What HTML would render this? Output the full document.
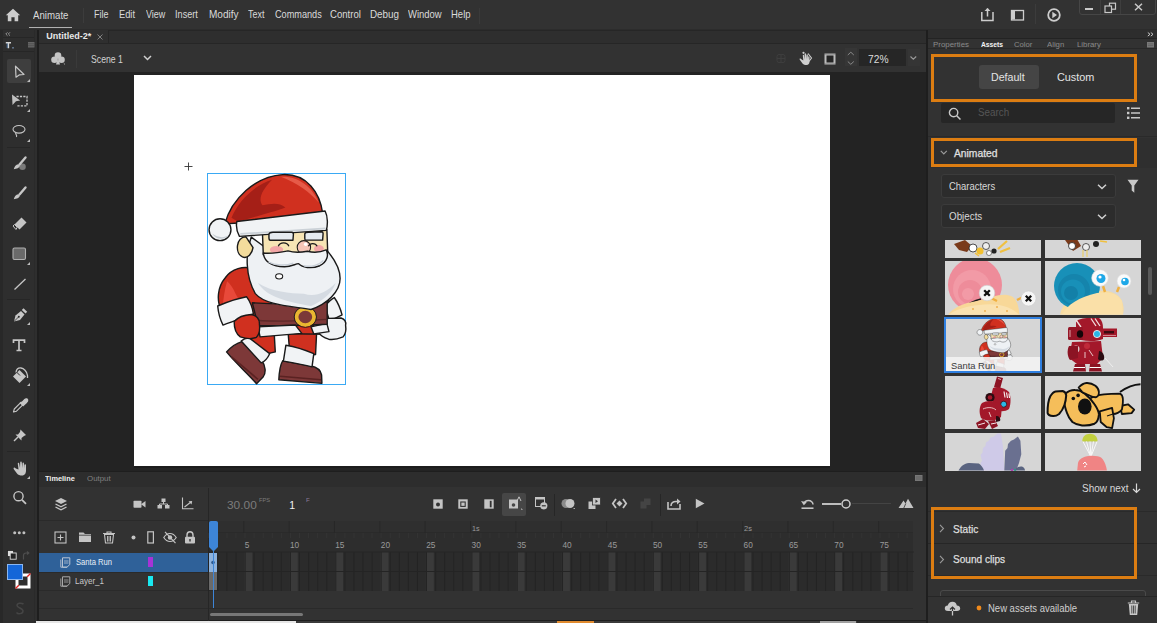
<!DOCTYPE html>
<html><head><meta charset="utf-8">
<style>
*{margin:0;padding:0;box-sizing:border-box;}
html,body{width:1157px;height:623px;overflow:hidden;background:#2b2b2b;font-family:"Liberation Sans",sans-serif;color:#d8d8d8;position:relative;}
.a{position:absolute;}
.t{position:absolute;white-space:nowrap;line-height:1;}
svg{position:absolute;overflow:visible;}
</style></head><body>
<div class="a" style="left:0px;top:0px;width:1157px;height:30px;background:#323232;"></div>
<div class="a" style="left:29px;top:27px;width:43px;height:1px;background:#b0b0b0;"></div>
<div class="a" style="left:83px;top:8px;width:1px;height:15px;background:#3c3c3c;"></div>
<div class="a" style="left:479px;top:8px;width:1px;height:16px;background:#3a3a3a;"></div>
<div class="a" style="left:0px;top:28.5px;width:1157px;height:1.5px;background:#2c2c2c;"></div>
<span class="t" style="left:32.75px;top:10.42px;font-size:11.20px;color:#dadada;transform:scaleX(0.864);transform-origin:0 0;">Animate</span>
<span class="t" style="left:94.48px;top:9.31px;font-size:10.50px;color:#dadada;transform:scaleX(0.853);transform-origin:0 0;">File</span>
<span class="t" style="left:119.06px;top:9.31px;font-size:10.50px;color:#dadada;transform:scaleX(0.885);transform-origin:0 0;">Edit</span>
<span class="t" style="left:145.66px;top:9.31px;font-size:10.50px;color:#dadada;transform:scaleX(0.857);transform-origin:0 0;">View</span>
<span class="t" style="left:175.18px;top:9.31px;font-size:10.50px;color:#dadada;transform:scaleX(0.871);transform-origin:0 0;">Insert</span>
<span class="t" style="left:208.50px;top:9.31px;font-size:10.50px;color:#dadada;transform:scaleX(0.956);transform-origin:0 0;">Modify</span>
<span class="t" style="left:248.28px;top:9.31px;font-size:10.50px;color:#dadada;transform:scaleX(0.852);transform-origin:0 0;">Text</span>
<span class="t" style="left:275.04px;top:9.31px;font-size:10.50px;color:#dadada;transform:scaleX(0.871);transform-origin:0 0;">Commands</span>
<span class="t" style="left:330.12px;top:9.31px;font-size:10.50px;color:#dadada;transform:scaleX(0.914);transform-origin:0 0;">Control</span>
<span class="t" style="left:370.01px;top:9.31px;font-size:10.50px;color:#dadada;transform:scaleX(0.939);transform-origin:0 0;">Debug</span>
<span class="t" style="left:407.95px;top:9.31px;font-size:10.50px;color:#dadada;transform:scaleX(0.900);transform-origin:0 0;">Window</span>
<span class="t" style="left:450.84px;top:9.31px;font-size:10.50px;color:#dadada;transform:scaleX(0.906);transform-origin:0 0;">Help</span>
<svg style="left:5px;top:8px;" width="16" height="14" viewBox="0 0 16 14"><path d="M8 0.8 L15.2 7.2 H13.2 V13.2 H9.6 V9.3 H6.4 V13.2 H2.8 V7.2 H0.8 Z" fill="#cdcdcd"/></svg>
<svg style="left:980px;top:7px;" width="15" height="15" viewBox="0 0 15 15"><path d="M1.8 5 V13.5 H13 V5" stroke="#cdcdcd" stroke-width="1.5" fill="none"/><path d="M7.5 1.5 V9.5" stroke="#cdcdcd" stroke-width="1.5"/><path d="M4.5 4 L7.5 1 L10.5 4 Z" fill="#cdcdcd"/></svg>
<svg style="left:1010px;top:9px;" width="15" height="13" viewBox="0 0 15 13"><rect x="1.5" y="1.5" width="12" height="9.5" fill="none" stroke="#cdcdcd" stroke-width="1.3"/><rect x="2" y="2" width="3" height="8.5" fill="#cdcdcd"/></svg>
<div class="a" style="left:1035px;top:4px;width:1px;height:20px;background:#3c3c3c;"></div>
<svg style="left:1047px;top:8px;" width="14" height="14" viewBox="0 0 14 14"><circle cx="7" cy="7" r="5.8" fill="none" stroke="#cdcdcd" stroke-width="1.8"/><path d="M5.3 3.8 L10 7 L5.3 10.2 Z" fill="#cdcdcd"/></svg>
<div class="a" style="left:1079px;top:-3px;width:77px;height:17.5px;background:transparent;border:1px solid #464646;border-radius:3px;"></div>
<div class="a" style="left:1100px;top:0px;width:1px;height:14px;background:#3e3e3e;"></div>
<div class="a" style="left:1120px;top:0px;width:1px;height:14px;background:#3e3e3e;"></div>
<div class="a" style="left:1085.3px;top:8px;width:7.7px;height:2px;background:#c8c8c8;"></div>
<svg style="left:1104px;top:2px;" width="13" height="11" viewBox="0 0 13 11"><rect x="5.5" y="1.2" width="6" height="6" fill="none" stroke="#c8c8c8" stroke-width="1.2"/><rect x="1" y="4" width="6.5" height="6.5" fill="#323232" stroke="#c8c8c8" stroke-width="1.2"/></svg>
<svg style="left:1134px;top:3px;" width="9" height="8" viewBox="0 0 9 8"><path d="M1 0.8 L8 7.2 M8 0.8 L1 7.2" stroke="#c8c8c8" stroke-width="1.5"/></svg>
<div class="a" style="left:0px;top:30px;width:37px;height:593px;background:#2e2e2e;"></div>
<div class="a" style="left:0px;top:30px;width:3px;height:593px;background:#282828;"></div>
<div class="a" style="left:34px;top:30px;width:1px;height:593px;background:#2a2a2a;"></div>
<div class="a" style="left:37px;top:30px;width:2px;height:593px;background:#1e1e1e;"></div>
<div class="a" style="left:3px;top:37px;width:31px;height:1px;background:#262626;"></div>
<div class="a" style="left:3px;top:51px;width:31px;height:1px;background:#262626;"></div>
<svg style="left:5px;top:31.5px;" width="6" height="4" viewBox="0 0 6 4"><path d="M2.5 0.3 L0.8 2 L2.5 3.7 M5 0.3 L3.3 2 L5 3.7" stroke="#aaa" stroke-width="0.8" fill="none"/></svg>
<svg style="left:5px;top:41.5px;" width="10" height="7" viewBox="0 0 10 7"><path d="M0.8 0.8 H6 M3.4 0.8 V6.3" stroke="#d4d4d4" stroke-width="1.5" fill="none"/><path d="M2.2 1.5 V6" stroke="#4f86c6" stroke-width="0.7"/><rect x="7.2" y="5" width="1.6" height="1.6" fill="#6a7f9a"/></svg>
<svg style="left:28px;top:42px;" width="7" height="6" viewBox="0 0 7 6"><rect x="0" y="0" width="6.5" height="5.5" fill="#666"/><path d="M0 1.8H6.5M0 3.7H6.5" stroke="#444" stroke-width="0.6"/></svg>
<div class="a" style="left:7px;top:59px;width:24px;height:24px;background:#3e3e3e;border-radius:2px;"></div>
<svg style="left:14px;top:65px;" width="12" height="13" viewBox="0 0 12 13"><path d="M1.5 1.2 L10 9.5 L5.5 9.8 L2 12.2 Z" stroke="#c6c6c6" stroke-width="1.2" fill="none" stroke-linejoin="round"/></svg>
<svg style="left:27px;top:79px;" width="3" height="3" viewBox="0 0 3 3"><path d="M3 0 L3 3 L0 3 Z" fill="#bdbdbd"/></svg>
<svg style="left:11px;top:94px;" width="18" height="13" viewBox="0 0 18 13"><path d="M5.5 2.5 H16 V11.8 H5.5" stroke="#c6c6c6" stroke-width="1.3" fill="none" stroke-dasharray="2.2 1.2"/><path d="M1 0.6 L9.2 6.5 L5 7.2 L1.5 11 Z" fill="#c0c0c0"/></svg>
<svg style="left:27px;top:109px;" width="3" height="3" viewBox="0 0 3 3"><path d="M3 0 L3 3 L0 3 Z" fill="#bdbdbd"/></svg>
<svg style="left:12px;top:124px;" width="14" height="14" viewBox="0 0 14 14"><ellipse cx="7" cy="5.3" rx="6" ry="3.8" stroke="#c6c6c6" stroke-width="1.1" fill="none"/><path d="M4 8.5 C2.5 10 5.5 10.5 4.5 13" stroke="#c6c6c6" stroke-width="1.1" fill="none"/></svg>
<svg style="left:27px;top:139px;" width="3" height="3" viewBox="0 0 3 3"><path d="M3 0 L3 3 L0 3 Z" fill="#bdbdbd"/></svg>
<div class="a" style="left:7px;top:147px;width:23px;height:1px;background:#262626;"></div>
<svg style="left:12px;top:156px;" width="16" height="15" viewBox="0 0 16 15"><circle cx="10.5" cy="10.8" r="3.3" fill="#7a7a7a"/><path d="M13.5 1.5 L7.5 8.5" stroke="#c6c6c6" stroke-width="2.4" stroke-linecap="round"/><path d="M6.2 8.2 C4 8.5 2.5 10.5 1.8 13.2 C4.5 13 7.5 11.8 7.8 9.8 Z" fill="#c6c6c6"/></svg>
<svg style="left:12px;top:186px;" width="16" height="15" viewBox="0 0 16 15"><path d="M13.5 1.5 L7.5 8.5" stroke="#c6c6c6" stroke-width="2.4" stroke-linecap="round"/><path d="M6.2 8.2 C4 8.5 2.5 10.5 1.8 13.2 C4.5 13 7.5 11.8 7.8 9.8 Z" fill="#c6c6c6"/></svg>
<svg style="left:12px;top:216px;" width="16" height="16" viewBox="0 0 16 16"><path d="M9.5 1.5 L14.5 6.5 L7.5 13.5 L2.5 8.5 Z" fill="#c4c4c4"/><path d="M5.2 11.2 L2.5 8.5 L1 10 L4 13.5 Z" fill="none" stroke="#c4c4c4" stroke-width="1"/></svg>
<svg style="left:12px;top:247px;" width="15" height="14" viewBox="0 0 15 14"><rect x="1" y="1" width="12.5" height="11.5" rx="1.5" fill="#6a6a6a" stroke="#b0b0b0" stroke-width="1.1"/></svg>
<svg style="left:27px;top:262px;" width="3" height="3" viewBox="0 0 3 3"><path d="M3 0 L3 3 L0 3 Z" fill="#bdbdbd"/></svg>
<svg style="left:12px;top:277px;" width="16" height="15" viewBox="0 0 16 15"><path d="M2.5 12.5 L13.5 2" stroke="#c6c6c6" stroke-width="1.3"/></svg>
<div class="a" style="left:7px;top:299px;width:23px;height:1px;background:#262626;"></div>
<svg style="left:12px;top:307px;" width="16" height="17" viewBox="0 0 16 17"><path d="M2 14.5 L3.5 8.5 L9 4 L12.5 7.5 L8 13 Z" fill="#c6c6c6"/><path d="M9.8 3 L11.5 1.2 L15.2 4.8 L13.5 6.5 Z" fill="#c6c6c6"/><circle cx="6.8" cy="9.8" r="1" fill="#2e2e2e"/><path d="M2 14.5 L6.5 10" stroke="#2e2e2e" stroke-width="0.8"/></svg>
<svg style="left:27px;top:322px;" width="3" height="3" viewBox="0 0 3 3"><path d="M3 0 L3 3 L0 3 Z" fill="#bdbdbd"/></svg>
<svg style="left:12px;top:339px;" width="14" height="13" viewBox="0 0 14 13"><path d="M1.5 4 V1.2 H12.5 V4 M7 1.2 V11.5 M4.5 11.5 H9.5" stroke="#c6c6c6" stroke-width="1.7" fill="none"/></svg>
<svg style="left:11px;top:367px;" width="18" height="17" viewBox="0 0 18 17"><path d="M2 9.5 L8.5 3 L15 9.5 L8.5 16 Z" fill="#c6c6c6"/><path d="M5 5.5 C5.5 1.5 8 0.8 10 1 C12.5 1.3 16 4 16.5 8.5 L16.5 11" stroke="#c6c6c6" stroke-width="1.3" fill="none"/><path d="M5.5 5 L9 8.5" stroke="#2e2e2e" stroke-width="1"/></svg>
<svg style="left:27px;top:383px;" width="3" height="3" viewBox="0 0 3 3"><path d="M3 0 L3 3 L0 3 Z" fill="#bdbdbd"/></svg>
<svg style="left:12px;top:397px;" width="16" height="17" viewBox="0 0 16 17"><path d="M1.5 15 L2.3 12 L9.2 5.2 L11.3 7.3 L4.5 14.2 Z" fill="none" stroke="#c6c6c6" stroke-width="1.1" stroke-linejoin="round"/><path d="M8 5.5 L11 8.5 M9.5 5.8 L12.8 2.5 C13.8 1.5 15.2 1.8 15.6 2.6 C16 3.4 15.7 4.5 14.5 5.5 L11.2 8.6 Z" fill="#c6c6c6" stroke="#c6c6c6" stroke-width="1.2"/></svg>
<svg style="left:12px;top:428px;" width="16" height="14" viewBox="0 0 16 14"><path d="M8.5 1.5 L14 7 L12 8 L9.5 10 L9.5 12.5 L3.5 6.5 L6 6.5 L8 4 Z" fill="#c6c6c6"/><path d="M6 9 L2 13" stroke="#c6c6c6" stroke-width="1.4"/></svg>
<div class="a" style="left:7px;top:451px;width:23px;height:1px;background:#262626;"></div>
<svg style="left:12px;top:461px;" width="16" height="15" viewBox="0 0 16 15"><path d="M3 7 C2 6 1 7 2 8.5 L5 12.5 C6 14 8 14.5 10 14.5 C13 14.5 14 12 14 9.5 L14 4 C14 3 12.5 3 12.5 4 L12.5 7.5 L12 2.5 C12 1.2 10.5 1.2 10.5 2.5 L10.3 7 L9.8 1.5 C9.8 0.3 8.2 0.3 8.2 1.5 L8 7 L7.2 2.5 C7 1.3 5.6 1.5 5.8 2.8 L6.5 8.5 L5 8 Z" fill="#c6c6c6"/></svg>
<svg style="left:27px;top:476px;" width="3" height="3" viewBox="0 0 3 3"><path d="M3 0 L3 3 L0 3 Z" fill="#bdbdbd"/></svg>
<svg style="left:12px;top:490px;" width="16" height="16" viewBox="0 0 16 16"><circle cx="6.5" cy="6.2" r="4.6" stroke="#c6c6c6" stroke-width="1.4" fill="none"/><path d="M10 9.8 L14 13.8" stroke="#c6c6c6" stroke-width="1.8"/></svg>
<svg style="left:13px;top:531px;" width="13" height="4" viewBox="0 0 13 4"><circle cx="1.7" cy="1.8" r="1.5" fill="#c0c0c0"/><circle cx="6.3" cy="1.8" r="1.5" fill="#c0c0c0"/><circle cx="10.9" cy="1.8" r="1.5" fill="#c0c0c0"/></svg>
<svg style="left:7px;top:550px;" width="10" height="10" viewBox="0 0 10 10"><rect x="0.5" y="0.5" width="6" height="6" fill="#ddd" stroke="#222" stroke-width="0.8"/><rect x="3.2" y="3" width="6" height="6.2" fill="#222" stroke="#ddd" stroke-width="0.9"/></svg>
<svg style="left:22px;top:551px;" width="8" height="9" viewBox="0 0 8 9"><path d="M1.5 8.5 L1.5 4.5 C1.5 2.8 2.5 2 4.2 2 L6.5 2 M5 0.5 L6.8 2 L5 3.5" stroke="#4e4e4e" stroke-width="1.2" fill="none"/></svg>
<svg style="left:14.5px;top:573px;" width="16" height="16" viewBox="0 0 16 16"><rect x="0.5" y="0.5" width="15" height="15" fill="#fff"/><rect x="3.5" y="3.5" width="9" height="9" fill="#2e2e2e"/><path d="M0.5 15.5 L3.8 12.2 M15.5 0.5 L12.2 3.8" stroke="#e02020" stroke-width="1.3"/></svg>
<div class="a" style="left:7px;top:564px;width:15.5px;height:15.5px;background:#1466d8;border:1px solid #8ab6f0;"></div>
<svg style="left:15px;top:602px;" width="10" height="13" viewBox="0 0 10 13"><path d="M8.5 2 C6 0.5 2 1 2 3.5 C2 6 8 6 8 9 C8 12 3 12.5 1.5 10.5" stroke="#454545" stroke-width="1.5" fill="none"/></svg>
<div class="a" style="left:39px;top:30px;width:887px;height:14px;background:#2e2e2e;"></div>
<div class="a" style="left:39px;top:29.5px;width:887px;height:1px;background:#262626;"></div>
<div class="a" style="left:39px;top:30px;width:69px;height:14px;background:#2f2f2f;"></div>
<div class="a" style="left:108px;top:30px;width:1px;height:14px;background:#262626;"></div>
<div class="a" style="left:39px;top:43px;width:887px;height:1px;background:#262626;"></div>
<div class="a" style="left:39px;top:44px;width:887px;height:28px;background:#323232;"></div>
<div class="a" style="left:39px;top:72px;width:887px;height:400px;background:#232323;"></div>
<div class="a" style="left:134px;top:75px;width:696px;height:391px;background:#ffffff;"></div>
<div class="a" style="left:134px;top:466px;width:696px;height:2px;background:#1c1c1c;"></div>
<span class="t" style="left:46.26px;top:32.38px;font-size:9.00px;color:#e8e8e8;font-weight:bold;">Untitled-2*</span>
<svg style="left:96.5px;top:34px;" width="6" height="6" viewBox="0 0 6 6"><path d="M0.5 0.5 L5.5 5.5 M5.5 0.5 L0.5 5.5" stroke="#8a8a8a" stroke-width="0.9"/></svg>
<svg style="left:50px;top:51px;" width="16" height="16" viewBox="0 0 16 16"><circle cx="8" cy="4.6" r="3.3" fill="#c4c4c4"/><circle cx="4.5" cy="8.8" r="3.3" fill="#c4c4c4"/><circle cx="11.5" cy="8.8" r="3.3" fill="#c4c4c4"/><path d="M8 7 L6 13.5 H10 Z" fill="#c4c4c4"/><path d="M13.5 12.5 L15 12.5 L15 14 Z" fill="#aaa"/></svg>
<div class="a" style="left:76px;top:50px;width:1px;height:18px;background:#3a3a3a;"></div>
<span class="t" style="left:90.91px;top:54.50px;font-size:10.40px;color:#d2d2d2;transform:scaleX(0.836);transform-origin:0 0;">Scene 1</span>
<svg style="left:143px;top:55px;" width="9" height="6" viewBox="0 0 9 6"><path d="M1 1 L4.5 4.5 L8 1" stroke="#d0d0d0" stroke-width="1.5" fill="none"/></svg>
<svg style="left:776px;top:54px;" width="10" height="9" viewBox="0 0 10 9"><rect x="1" y="0.5" width="8" height="8" rx="2" fill="none" stroke="#3e3e3e" stroke-width="1"/><path d="M1 4.5H9M5 0.5V8.5" stroke="#3e3e3e" stroke-width="1"/></svg>
<svg style="left:798px;top:51px;" width="15" height="15" viewBox="0 0 15 15"><path d="M3 8 C2 7 1 8 2 9 L4.5 12.5 C5.5 13.8 7 14 8.5 14 C10.5 14 11.5 12.5 11.5 10.5 L11.5 6 C11.5 5 10.2 5 10.2 6 L10 8.5 L9.8 4 C9.8 3 8.5 3 8.5 4 L8.3 8.2 L8 3 C8 2 6.6 2 6.6 3 L6.6 8.5 L6 4.5 C6 3.5 4.7 3.6 4.8 4.6 L5.3 9.5 Z" fill="#cfcfcf"/><path d="M10 2.5 L13.5 7 L11 10.5" stroke="#cfcfcf" stroke-width="1.1" fill="none"/><circle cx="5.5" cy="1.8" r="1.1" fill="#cfcfcf"/></svg>
<svg style="left:824px;top:53px;" width="12" height="12" viewBox="0 0 12 12"><rect x="0.5" y="0.5" width="11" height="11" fill="#bcbcbc"/><rect x="2.5" y="2.5" width="7" height="7" fill="#262626"/><path d="M0.5 1.2H11.5M0.5 10.8H11.5" stroke="#555" stroke-width="0.8" stroke-dasharray="1 1"/></svg>
<div class="a" style="left:845px;top:48px;width:12px;height:18px;background:#363636;"></div>
<svg style="left:847px;top:51px;" width="8" height="15" viewBox="0 0 8 15"><path d="M0.8 4 L3.8 1.2 L6.8 4 M0.8 10.5 L3.8 13.3 L6.8 10.5" stroke="#8a8a8a" stroke-width="1" fill="none"/></svg>
<div class="a" style="left:859px;top:49px;width:47px;height:17px;background:#262626;"></div>
<span class="t" style="left:867.69px;top:53.56px;font-size:10.80px;color:#dcdcdc;transform:scaleX(0.948);transform-origin:0 0;">72%</span>
<div class="a" style="left:908px;top:49px;width:12px;height:17px;background:#353535;"></div>
<svg style="left:910px;top:56px;" width="7" height="4" viewBox="0 0 7 4"><path d="M0.5 0.5 L3.3 3.2 L6.2 0.5" stroke="#9a9a9a" stroke-width="1.1" fill="none"/></svg>
<svg style="left:184px;top:162px;" width="9" height="9" viewBox="0 0 9 9"><path d="M4.5 0.5V8.5M0.5 4.5H8.5" stroke="#333" stroke-width="0.9"/></svg>
<div class="a" style="left:207px;top:173px;width:139px;height:212px;background:transparent;border:1px solid #3aa9f4;"></div>
<svg style="left:205px;top:170px;" width="145" height="220" viewBox="0 0 821 1245.6"><path d="M 250 933 C 300 915 360 915 392 928 L 398 1030 C 350 1045 300 1045 268 1040 Z" fill="#d0301f" stroke="#1a1a1a" stroke-width="8" stroke-linejoin="round"/><path d="M 470 913 C 520 905 600 910 632 920 L 626 1045 C 580 1050 520 1048 480 1040 Z" fill="#d0301f" stroke="#1a1a1a" stroke-width="8" stroke-linejoin="round"/><path d="M 122 1030 C 150 1000 180 980 210 972 L 322 1080 C 345 1110 345 1150 330 1170 L 292 1210 C 240 1150 170 1090 122 1030 Z" fill="#7d3838" stroke="#1a1a1a" stroke-width="8" stroke-linejoin="round"/><path d="M 150 1058 L 300 1185" stroke="#5a2222" stroke-width="9"/><path d="M 205 968 C 220 955 240 950 252 952 L 366 1040 C 355 1065 335 1085 318 1092 Z" fill="#f1f3f5" stroke="#1a1a1a" stroke-width="8" stroke-linejoin="round"/><path d="M 440 1080 L 598 1108 C 630 1115 655 1130 660 1160 L 662 1208 L 418 1188 C 420 1140 428 1100 440 1080 Z" fill="#7d3838" stroke="#1a1a1a" stroke-width="8" stroke-linejoin="round"/><path d="M 425 1168 L 657 1188" stroke="#5a2222" stroke-width="9"/><path d="M 458 992 C 510 1000 570 1020 616 1040 L 606 1115 C 550 1100 490 1090 444 1082 Z" fill="#f1f3f5" stroke="#1a1a1a" stroke-width="8" stroke-linejoin="round"/><path d="M 115 610 C 150 560 220 540 270 560 L 700 740 L 700 930 L 270 925 L 95 800 C 62 740 72 660 115 610 Z" fill="#d0301f" stroke="#1a1a1a" stroke-width="8" stroke-linejoin="round"/><path d="M 125 630 C 110 680 105 730 100 770 L 190 730 C 170 700 160 660 125 630 Z" fill="#e8493a"/><path d="M 680 770 C 700 745 715 730 732 722 C 752 750 768 790 776 820 L 705 856 Z" fill="#f1f3f5" stroke="#1a1a1a" stroke-width="8" stroke-linejoin="round"/><path d="M 612 880 C 640 860 670 845 700 840 L 770 838 C 790 845 800 862 796 880 C 800 905 795 930 782 945 C 750 958 720 962 700 958 C 675 950 655 940 642 918 Z" fill="#f1f3f5" stroke="#1a1a1a" stroke-width="8" stroke-linejoin="round"/><path d="M 600 888 L 690 868 L 702 915 L 616 928 Z" fill="#f1f3f5" stroke="#1a1a1a" stroke-width="8" stroke-linejoin="round"/><path d="M 268 752 C 400 760 560 760 692 745 L 692 873 C 560 882 420 882 300 880 Z" fill="#7d3838" stroke="#1a1a1a" stroke-width="8" stroke-linejoin="round"/><path d="M 290 852 C 420 858 560 856 686 846" stroke="#5c2727" stroke-width="8" fill="none"/><path d="M 300 888 L 512 878 L 548 925 L 312 945 Z" fill="#f1f3f5" stroke="#1a1a1a" stroke-width="8" stroke-linejoin="round"/><ellipse cx="568" cy="832" rx="50" ry="46" fill="#7b3838" stroke="#e9b631" stroke-width="22"/><ellipse cx="568" cy="832" rx="63" ry="59" fill="none" stroke="#1a1a1a" stroke-width="5"/><path d="M 72 770 C 120 750 180 728 236 718 C 256 745 270 785 274 815 C 220 835 160 855 102 878 C 85 845 75 805 72 770 Z" fill="#f1f3f5" stroke="#1a1a1a" stroke-width="8" stroke-linejoin="round"/><path d="M 165 858 C 185 835 220 820 262 818 C 292 822 310 845 308 872 C 312 905 305 935 290 948 C 265 958 230 955 200 945 C 178 930 165 895 165 858 Z" fill="#d0301f" stroke="#1a1a1a" stroke-width="8" stroke-linejoin="round"/><path d="M 262 380 C 228 470 228 600 285 700 C 340 765 480 770 600 790 C 690 760 765 690 765 615 C 765 555 725 495 690 455 L 330 430 Z" fill="#eef1f4" stroke="#1a1a1a" stroke-width="8" stroke-linejoin="round"/><path d="M 300 640 C 350 720 460 745 600 770 C 660 745 720 700 740 640 C 680 700 620 720 560 700 C 480 700 380 690 300 640 Z" fill="#d5dbe2"/><path d="M 232 378 C 175 380 168 470 212 492 C 242 505 268 470 272 440 Z" fill="#f3dc9c" stroke="#1a1a1a" stroke-width="8" stroke-linejoin="round"/><path d="M 325 345 L 690 335 L 695 470 L 330 480 Z" fill="#f6e4b4" stroke="#1a1a1a" stroke-width="8" stroke-linejoin="round"/><ellipse cx="405" cy="452" rx="38" ry="22" fill="#f2a6a6"/><ellipse cx="645" cy="446" rx="28" ry="21" fill="#f2a6a6"/><circle cx="560" cy="438" r="38" fill="#f5c6b8" stroke="#1a1a1a" stroke-width="6"/><circle cx="570" cy="420" r="10" fill="#fff"/><path d="M 415 432 C 425 407 465 407 475 432 M 585 432 C 595 412 625 412 635 432" stroke="#1a1a1a" stroke-width="7" fill="none"/><path d="M 330 470 C 335 520 380 548 450 548 C 490 548 510 532 530 530 C 550 552 600 562 650 542 C 692 522 702 480 686 452 C 650 468 610 468 580 460 C 540 468 500 468 470 458 C 420 468 380 474 330 470 Z" fill="#f2f4f6" stroke="#1a1a1a" stroke-width="8" stroke-linejoin="round"/><path d="M 360 522 C 400 542 460 542 500 527 M 560 542 C 600 552 650 537 670 512" stroke="#c9d0d8" stroke-width="8" fill="none"/><path d="M 112 305 C 150 165 285 35 440 26 C 578 20 652 130 666 245 L 190 300 Z" fill="#d0301f" stroke="#1a1a1a" stroke-width="8" stroke-linejoin="round"/><path d="M 150 270 C 190 170 290 80 380 55 C 320 115 300 165 325 200 C 375 190 420 182 455 212 C 380 240 255 272 185 292 Z" fill="#a51f17"/><path d="M 430 38 C 525 33 605 90 645 185 C 600 130 520 72 430 38 Z" fill="#e65a48"/><path d="M 180 292 L 680 232 C 696 262 696 318 686 342 L 195 376 C 180 350 176 315 180 292 Z" fill="#f1f3f5" stroke="#1a1a1a" stroke-width="8" stroke-linejoin="round"/><path d="M 200 362 L 682 330" stroke="#cbd1d7" stroke-width="10"/><path d="M 362 366 C 362 354 372 352 385 352 L 490 352 C 500 352 502 360 500 372 L 498 398 L 370 398 C 362 398 362 390 362 382 Z" fill="#e6ebf0" stroke="#1a1a1a" stroke-width="8" stroke-linejoin="round"/><path d="M 565 362 C 565 354 575 352 585 352 L 660 350 C 668 350 670 358 668 370 L 666 397 L 570 397 C 565 397 565 390 565 382 Z" fill="#e6ebf0" stroke="#1a1a1a" stroke-width="8" stroke-linejoin="round"/><path d="M 147 338 C 147 372 119 400 85 400 C 51 400 23 372 23 338 C 23 304 51 276 85 276 C 119 276 147 304 147 338 Z" fill="#f1f3f5" stroke="#1a1a1a" stroke-width="8" stroke-linejoin="round"/><path d="M 40 360 C 60 395 110 400 135 370 C 110 385 70 385 40 360 Z" fill="#c5ccd2"/><ellipse cx="420" cy="602" rx="20" ry="15" fill="#fff" stroke="#1a1a1a" stroke-width="6"/></svg>
<div class="a" style="left:39px;top:472px;width:887px;height:149px;background:#323232;"></div>
<div class="a" style="left:39px;top:472px;width:887px;height:15px;background:#2d2d2d;"></div>
<div class="a" style="left:39px;top:471px;width:887px;height:1px;background:#1e1e1e;"></div>
<span class="t" style="left:44.53px;top:474.54px;font-size:8.10px;color:#f0f0f0;font-weight:bold;transform:scaleX(0.910);transform-origin:0 0;">Timeline</span>
<span class="t" style="left:86.64px;top:474.54px;font-size:8.10px;color:#808080;transform:scaleX(0.975);transform-origin:0 0;">Output</span>
<div class="a" style="left:926px;top:472px;width:1px;height:149px;background:#1e1e1e;"></div>
<div class="a" style="left:39px;top:620px;width:887px;height:1px;background:#1e1e1e;"></div>
<svg style="left:54px;top:497px;" width="14" height="14" viewBox="0 0 14 14"><path d="M7 1 L13 4 L7 7 L1 4 Z" fill="#c4c4c4"/><path d="M1.5 7 L7 9.8 L12.5 7" stroke="#c4c4c4" stroke-width="1.4" fill="none"/><path d="M1.5 10 L7 12.8 L12.5 10" stroke="#c4c4c4" stroke-width="1.4" fill="none"/></svg>
<svg style="left:133px;top:500px;" width="13" height="9" viewBox="0 0 13 9"><rect x="0.5" y="0.8" width="8" height="7" rx="0.8" fill="#c4c4c4"/><path d="M8 4.2 L12.5 1 V7.6 Z" fill="#c4c4c4"/></svg>
<svg style="left:157px;top:498px;" width="13" height="11" viewBox="0 0 13 11"><rect x="4.5" y="0.5" width="4" height="3.5" fill="#c4c4c4"/><path d="M6.5 4 V6 M2.5 6 H10.5 M2.5 6 V7 M10.5 6 V7" stroke="#c4c4c4" stroke-width="1"/><rect x="0.5" y="7" width="4.5" height="3.5" fill="#c4c4c4"/><rect x="8" y="7" width="4.5" height="3.5" fill="#c4c4c4"/></svg>
<svg style="left:181px;top:497px;" width="13" height="13" viewBox="0 0 13 13"><path d="M1.5 0.5 V11.8 H12.5" stroke="#c4c4c4" stroke-width="1.1" fill="none"/><path d="M3.5 10 L10 5" stroke="#c4c4c4" stroke-width="1.1"/><path d="M7.5 4.2 L11.2 4 L10.5 7.5 Z" fill="#c4c4c4"/></svg>
<div class="a" style="left:208px;top:488px;width:1px;height:133px;background:#262626;"></div>
<div class="a" style="left:39px;top:520px;width:169px;height:1px;background:#2a2a2a;"></div>
<span class="t" style="left:227.02px;top:499.61px;font-size:10.50px;color:#7c7c7c;transform:scaleX(1.133);transform-origin:0 0;">30.00</span>
<span class="t" style="left:259.04px;top:498.34px;font-size:5.50px;color:#7c7c7c;transform:scaleX(1.049);transform-origin:0 0;">FPS</span>
<span class="t" style="left:289.22px;top:499.61px;font-size:10.50px;color:#f2f2f2;">1</span>
<span class="t" style="left:305.51px;top:498.34px;font-size:5.50px;color:#8a7a9a;transform:scaleX(1.113);transform-origin:0 0;">F</span>
<svg style="left:54px;top:531px;" width="13" height="13" viewBox="0 0 13 13"><rect x="1" y="1" width="11" height="11" fill="none" stroke="#c4c4c4" stroke-width="1.1"/><path d="M6.5 3.5 V9.5 M3.5 6.5 H9.5" stroke="#c4c4c4" stroke-width="1.1"/></svg>
<svg style="left:78px;top:531px;" width="14" height="12" viewBox="0 0 14 12"><path d="M1 1.5 H5.5 L7 3 H13 V11 H1 Z" fill="#c4c4c4"/><path d="M1 4.2 H13" stroke="#323232" stroke-width="0.8"/></svg>
<svg style="left:102px;top:531px;" width="14" height="13" viewBox="0 0 14 13"><path d="M1 2.5 H13 M5 2.5 V1 H9 V2.5" stroke="#c4c4c4" stroke-width="1.1" fill="none"/><path d="M2.5 3.5 L3.5 12 H10.5 L11.5 3.5 Z" fill="none" stroke="#c4c4c4" stroke-width="1.1"/><path d="M5.5 5 V10.5 M7 5 V10.5 M8.5 5 V10.5" stroke="#c4c4c4" stroke-width="0.9"/></svg>
<svg style="left:131px;top:535px;" width="5" height="5" viewBox="0 0 5 5"><circle cx="2.5" cy="2.5" r="2" fill="#c4c4c4"/></svg>
<svg style="left:147px;top:531px;" width="8" height="13" viewBox="0 0 8 13"><rect x="0.8" y="0.8" width="5.6" height="11.2" fill="none" stroke="#c4c4c4" stroke-width="1.2"/></svg>
<svg style="left:163px;top:531px;" width="14" height="13" viewBox="0 0 14 13"><path d="M0.8 6.5 C3 3 5 2.5 7 2.5 C9 2.5 11 3 13.2 6.5 C11 10 9 10.5 7 10.5 C5 10.5 3 10 0.8 6.5 Z" fill="none" stroke="#c4c4c4" stroke-width="1.2"/><circle cx="7" cy="6.5" r="2.2" fill="#c4c4c4"/><path d="M2 0.8 L12.5 12.2" stroke="#c4c4c4" stroke-width="1.2"/></svg>
<svg style="left:184px;top:531px;" width="12" height="13" viewBox="0 0 12 13"><path d="M3 6 V4 C3 1.5 4.5 0.8 6 0.8 C7.5 0.8 9 1.5 9 4 V6" stroke="#c4c4c4" stroke-width="1.4" fill="none"/><rect x="1" y="5.8" width="10" height="6.8" rx="1" fill="#c4c4c4"/><rect x="5.3" y="8" width="1.4" height="2.5" fill="#323232"/></svg>
<div class="a" style="left:39px;top:553px;width:169px;height:19px;background:#2f6199;"></div>
<div class="a" style="left:39px;top:572px;width:169px;height:1px;background:#2a2a2a;"></div>
<div class="a" style="left:39px;top:590px;width:169px;height:1px;background:#2a2a2a;"></div>
<div class="a" style="left:39px;top:608px;width:169px;height:1px;background:#2a2a2a;"></div>
<svg style="left:60px;top:557px;" width="11" height="11" viewBox="0 0 11 11"><path d="M2.5 0.8 H9.8 V7.5 L7 10.2 H2.5 Z" fill="none" stroke="#b8c4d4" stroke-width="1"/><path d="M0.8 2.5 V10.2 H7" stroke="#b8c4d4" stroke-width="0.9" fill="none"/><path d="M4 4 H8.5 M4 6 H8.5" stroke="#b8c4d4" stroke-width="0.8"/></svg>
<span class="t" style="left:75.86px;top:557.85px;font-size:8.80px;color:#e8eef6;transform:scaleX(0.867);transform-origin:0 0;">Santa Run</span>
<div class="a" style="left:148px;top:557px;width:5px;height:10px;background:#a633d6;"></div>
<svg style="left:60px;top:576px;" width="11" height="11" viewBox="0 0 11 11"><path d="M2.5 0.8 H9.8 V7.5 L7 10.2 H2.5 Z" fill="none" stroke="#a8a8a8" stroke-width="1"/><path d="M0.8 2.5 V10.2 H7" stroke="#a8a8a8" stroke-width="0.9" fill="none"/><path d="M4 4 H8.5 M4 6 H8.5" stroke="#a8a8a8" stroke-width="0.8"/></svg>
<span class="t" style="left:75.36px;top:576.85px;font-size:8.80px;color:#c8c8c8;transform:scaleX(0.913);transform-origin:0 0;">Layer_1</span>
<div class="a" style="left:148px;top:576px;width:5px;height:10px;background:#19e8f0;"></div>
<div class="a" style="left:209px;top:521px;width:704px;height:12px;background:#2f2f2f;"></div>
<div class="a" style="left:209px;top:532px;width:704px;height:1px;background:#2a2a2a;"></div>
<div class="a" style="left:209px;top:533px;width:704px;height:19px;background:#2d2d2d;"></div>
<div class="a" style="left:209px;top:552px;width:704px;height:39px;background:#2b2b2b;"></div>
<svg style="left:208px;top:0px;" width="706" height="623" viewBox="0 0 706 623"><rect x="0.30" y="552" width="1" height="39" fill="#242424"/><rect x="0.30" y="533" width="1" height="5" fill="#343434"/><rect x="9.37" y="552" width="1" height="39" fill="#242424"/><rect x="9.37" y="533" width="1" height="5" fill="#343434"/><rect x="18.44" y="552" width="1" height="39" fill="#242424"/><rect x="18.44" y="533" width="1" height="5" fill="#343434"/><rect x="27.51" y="552" width="1" height="39" fill="#242424"/><rect x="27.51" y="533" width="1" height="5" fill="#343434"/><rect x="36.38" y="552" width="8.07" height="39" fill="#3a3a3a"/><rect x="36.58" y="552" width="1" height="39" fill="#242424"/><rect x="36.58" y="533" width="1" height="5" fill="#343434"/><rect x="35.28" y="521" width="1" height="12" fill="#282828"/><rect x="45.65" y="552" width="1" height="39" fill="#242424"/><rect x="45.65" y="533" width="1" height="5" fill="#343434"/><rect x="54.72" y="552" width="1" height="39" fill="#242424"/><rect x="54.72" y="533" width="1" height="5" fill="#343434"/><rect x="63.79" y="552" width="1" height="39" fill="#242424"/><rect x="63.79" y="533" width="1" height="5" fill="#343434"/><rect x="72.86" y="552" width="1" height="39" fill="#242424"/><rect x="72.86" y="533" width="1" height="5" fill="#343434"/><rect x="81.73" y="552" width="8.07" height="39" fill="#3a3a3a"/><rect x="81.93" y="552" width="1" height="39" fill="#242424"/><rect x="81.93" y="533" width="1" height="5" fill="#343434"/><rect x="80.63" y="521" width="1" height="12" fill="#282828"/><rect x="91.00" y="552" width="1" height="39" fill="#242424"/><rect x="91.00" y="533" width="1" height="5" fill="#343434"/><rect x="100.07" y="552" width="1" height="39" fill="#242424"/><rect x="100.07" y="533" width="1" height="5" fill="#343434"/><rect x="109.14" y="552" width="1" height="39" fill="#242424"/><rect x="109.14" y="533" width="1" height="5" fill="#343434"/><rect x="118.21" y="552" width="1" height="39" fill="#242424"/><rect x="118.21" y="533" width="1" height="5" fill="#343434"/><rect x="127.08" y="552" width="8.07" height="39" fill="#3a3a3a"/><rect x="127.28" y="552" width="1" height="39" fill="#242424"/><rect x="127.28" y="533" width="1" height="5" fill="#343434"/><rect x="125.98" y="521" width="1" height="12" fill="#282828"/><rect x="136.35" y="552" width="1" height="39" fill="#242424"/><rect x="136.35" y="533" width="1" height="5" fill="#343434"/><rect x="145.42" y="552" width="1" height="39" fill="#242424"/><rect x="145.42" y="533" width="1" height="5" fill="#343434"/><rect x="154.49" y="552" width="1" height="39" fill="#242424"/><rect x="154.49" y="533" width="1" height="5" fill="#343434"/><rect x="163.56" y="552" width="1" height="39" fill="#242424"/><rect x="163.56" y="533" width="1" height="5" fill="#343434"/><rect x="172.43" y="552" width="8.07" height="39" fill="#3a3a3a"/><rect x="172.63" y="552" width="1" height="39" fill="#242424"/><rect x="172.63" y="533" width="1" height="5" fill="#343434"/><rect x="171.33" y="521" width="1" height="12" fill="#282828"/><rect x="181.70" y="552" width="1" height="39" fill="#242424"/><rect x="181.70" y="533" width="1" height="5" fill="#343434"/><rect x="190.77" y="552" width="1" height="39" fill="#242424"/><rect x="190.77" y="533" width="1" height="5" fill="#343434"/><rect x="199.84" y="552" width="1" height="39" fill="#242424"/><rect x="199.84" y="533" width="1" height="5" fill="#343434"/><rect x="208.91" y="552" width="1" height="39" fill="#242424"/><rect x="208.91" y="533" width="1" height="5" fill="#343434"/><rect x="217.78" y="552" width="8.07" height="39" fill="#3a3a3a"/><rect x="217.98" y="552" width="1" height="39" fill="#242424"/><rect x="217.98" y="533" width="1" height="5" fill="#343434"/><rect x="216.68" y="521" width="1" height="12" fill="#282828"/><rect x="227.05" y="552" width="1" height="39" fill="#242424"/><rect x="227.05" y="533" width="1" height="5" fill="#343434"/><rect x="236.12" y="552" width="1" height="39" fill="#242424"/><rect x="236.12" y="533" width="1" height="5" fill="#343434"/><rect x="245.19" y="552" width="1" height="39" fill="#242424"/><rect x="245.19" y="533" width="1" height="5" fill="#343434"/><rect x="254.26" y="552" width="1" height="39" fill="#242424"/><rect x="254.26" y="533" width="1" height="5" fill="#343434"/><rect x="263.13" y="552" width="8.07" height="39" fill="#3a3a3a"/><rect x="263.33" y="552" width="1" height="39" fill="#242424"/><rect x="263.33" y="533" width="1" height="5" fill="#343434"/><rect x="262.03" y="521" width="1" height="12" fill="#282828"/><rect x="272.40" y="552" width="1" height="39" fill="#242424"/><rect x="272.40" y="533" width="1" height="5" fill="#343434"/><rect x="281.47" y="552" width="1" height="39" fill="#242424"/><rect x="281.47" y="533" width="1" height="5" fill="#343434"/><rect x="290.54" y="552" width="1" height="39" fill="#242424"/><rect x="290.54" y="533" width="1" height="5" fill="#343434"/><rect x="299.61" y="552" width="1" height="39" fill="#242424"/><rect x="299.61" y="533" width="1" height="5" fill="#343434"/><rect x="308.48" y="552" width="8.07" height="39" fill="#3a3a3a"/><rect x="308.68" y="552" width="1" height="39" fill="#242424"/><rect x="308.68" y="533" width="1" height="5" fill="#343434"/><rect x="307.38" y="521" width="1" height="12" fill="#282828"/><rect x="317.75" y="552" width="1" height="39" fill="#242424"/><rect x="317.75" y="533" width="1" height="5" fill="#343434"/><rect x="326.82" y="552" width="1" height="39" fill="#242424"/><rect x="326.82" y="533" width="1" height="5" fill="#343434"/><rect x="335.89" y="552" width="1" height="39" fill="#242424"/><rect x="335.89" y="533" width="1" height="5" fill="#343434"/><rect x="344.96" y="552" width="1" height="39" fill="#242424"/><rect x="344.96" y="533" width="1" height="5" fill="#343434"/><rect x="353.83" y="552" width="8.07" height="39" fill="#3a3a3a"/><rect x="354.03" y="552" width="1" height="39" fill="#242424"/><rect x="354.03" y="533" width="1" height="5" fill="#343434"/><rect x="352.73" y="521" width="1" height="12" fill="#282828"/><rect x="363.10" y="552" width="1" height="39" fill="#242424"/><rect x="363.10" y="533" width="1" height="5" fill="#343434"/><rect x="372.17" y="552" width="1" height="39" fill="#242424"/><rect x="372.17" y="533" width="1" height="5" fill="#343434"/><rect x="381.24" y="552" width="1" height="39" fill="#242424"/><rect x="381.24" y="533" width="1" height="5" fill="#343434"/><rect x="390.31" y="552" width="1" height="39" fill="#242424"/><rect x="390.31" y="533" width="1" height="5" fill="#343434"/><rect x="399.18" y="552" width="8.07" height="39" fill="#3a3a3a"/><rect x="399.38" y="552" width="1" height="39" fill="#242424"/><rect x="399.38" y="533" width="1" height="5" fill="#343434"/><rect x="398.08" y="521" width="1" height="12" fill="#282828"/><rect x="408.45" y="552" width="1" height="39" fill="#242424"/><rect x="408.45" y="533" width="1" height="5" fill="#343434"/><rect x="417.52" y="552" width="1" height="39" fill="#242424"/><rect x="417.52" y="533" width="1" height="5" fill="#343434"/><rect x="426.59" y="552" width="1" height="39" fill="#242424"/><rect x="426.59" y="533" width="1" height="5" fill="#343434"/><rect x="435.66" y="552" width="1" height="39" fill="#242424"/><rect x="435.66" y="533" width="1" height="5" fill="#343434"/><rect x="444.53" y="552" width="8.07" height="39" fill="#3a3a3a"/><rect x="444.73" y="552" width="1" height="39" fill="#242424"/><rect x="444.73" y="533" width="1" height="5" fill="#343434"/><rect x="443.43" y="521" width="1" height="12" fill="#282828"/><rect x="453.80" y="552" width="1" height="39" fill="#242424"/><rect x="453.80" y="533" width="1" height="5" fill="#343434"/><rect x="462.87" y="552" width="1" height="39" fill="#242424"/><rect x="462.87" y="533" width="1" height="5" fill="#343434"/><rect x="471.94" y="552" width="1" height="39" fill="#242424"/><rect x="471.94" y="533" width="1" height="5" fill="#343434"/><rect x="481.01" y="552" width="1" height="39" fill="#242424"/><rect x="481.01" y="533" width="1" height="5" fill="#343434"/><rect x="489.88" y="552" width="8.07" height="39" fill="#3a3a3a"/><rect x="490.08" y="552" width="1" height="39" fill="#242424"/><rect x="490.08" y="533" width="1" height="5" fill="#343434"/><rect x="488.78" y="521" width="1" height="12" fill="#282828"/><rect x="499.15" y="552" width="1" height="39" fill="#242424"/><rect x="499.15" y="533" width="1" height="5" fill="#343434"/><rect x="508.22" y="552" width="1" height="39" fill="#242424"/><rect x="508.22" y="533" width="1" height="5" fill="#343434"/><rect x="517.29" y="552" width="1" height="39" fill="#242424"/><rect x="517.29" y="533" width="1" height="5" fill="#343434"/><rect x="526.36" y="552" width="1" height="39" fill="#242424"/><rect x="526.36" y="533" width="1" height="5" fill="#343434"/><rect x="535.23" y="552" width="8.07" height="39" fill="#3a3a3a"/><rect x="535.43" y="552" width="1" height="39" fill="#242424"/><rect x="535.43" y="533" width="1" height="5" fill="#343434"/><rect x="534.13" y="521" width="1" height="12" fill="#282828"/><rect x="544.50" y="552" width="1" height="39" fill="#242424"/><rect x="544.50" y="533" width="1" height="5" fill="#343434"/><rect x="553.57" y="552" width="1" height="39" fill="#242424"/><rect x="553.57" y="533" width="1" height="5" fill="#343434"/><rect x="562.64" y="552" width="1" height="39" fill="#242424"/><rect x="562.64" y="533" width="1" height="5" fill="#343434"/><rect x="571.71" y="552" width="1" height="39" fill="#242424"/><rect x="571.71" y="533" width="1" height="5" fill="#343434"/><rect x="580.58" y="552" width="8.07" height="39" fill="#3a3a3a"/><rect x="580.78" y="552" width="1" height="39" fill="#242424"/><rect x="580.78" y="533" width="1" height="5" fill="#343434"/><rect x="579.48" y="521" width="1" height="12" fill="#282828"/><rect x="589.85" y="552" width="1" height="39" fill="#242424"/><rect x="589.85" y="533" width="1" height="5" fill="#343434"/><rect x="598.92" y="552" width="1" height="39" fill="#242424"/><rect x="598.92" y="533" width="1" height="5" fill="#343434"/><rect x="607.99" y="552" width="1" height="39" fill="#242424"/><rect x="607.99" y="533" width="1" height="5" fill="#343434"/><rect x="617.06" y="552" width="1" height="39" fill="#242424"/><rect x="617.06" y="533" width="1" height="5" fill="#343434"/><rect x="625.93" y="552" width="8.07" height="39" fill="#3a3a3a"/><rect x="626.13" y="552" width="1" height="39" fill="#242424"/><rect x="626.13" y="533" width="1" height="5" fill="#343434"/><rect x="624.83" y="521" width="1" height="12" fill="#282828"/><rect x="635.20" y="552" width="1" height="39" fill="#242424"/><rect x="635.20" y="533" width="1" height="5" fill="#343434"/><rect x="644.27" y="552" width="1" height="39" fill="#242424"/><rect x="644.27" y="533" width="1" height="5" fill="#343434"/><rect x="653.34" y="552" width="1" height="39" fill="#242424"/><rect x="653.34" y="533" width="1" height="5" fill="#343434"/><rect x="662.41" y="552" width="1" height="39" fill="#242424"/><rect x="662.41" y="533" width="1" height="5" fill="#343434"/><rect x="671.28" y="552" width="8.07" height="39" fill="#3a3a3a"/><rect x="671.48" y="552" width="1" height="39" fill="#242424"/><rect x="671.48" y="533" width="1" height="5" fill="#343434"/><rect x="670.18" y="521" width="1" height="12" fill="#282828"/><rect x="680.55" y="552" width="1" height="39" fill="#242424"/><rect x="680.55" y="533" width="1" height="5" fill="#343434"/><rect x="689.62" y="552" width="1" height="39" fill="#242424"/><rect x="689.62" y="533" width="1" height="5" fill="#343434"/><rect x="698.69" y="552" width="1" height="39" fill="#242424"/><rect x="698.69" y="533" width="1" height="5" fill="#343434"/><rect x="0" y="571" width="706" height="1" fill="#242424"/><rect x="0" y="551.5" width="706" height="1" fill="#262626"/></svg>
<span class="t" style="left:244.85px;top:540.97px;font-size:8.30px;color:#9a9a9a;">5</span>
<span class="t" style="left:289.91px;top:540.97px;font-size:8.30px;color:#9a9a9a;">10</span>
<span class="t" style="left:335.26px;top:540.97px;font-size:8.30px;color:#9a9a9a;">15</span>
<span class="t" style="left:380.81px;top:540.97px;font-size:8.30px;color:#9a9a9a;">20</span>
<span class="t" style="left:426.17px;top:540.97px;font-size:8.30px;color:#9a9a9a;">25</span>
<span class="t" style="left:471.60px;top:540.97px;font-size:8.30px;color:#9a9a9a;">30</span>
<span class="t" style="left:516.95px;top:540.97px;font-size:8.30px;color:#9a9a9a;">35</span>
<span class="t" style="left:562.42px;top:540.97px;font-size:8.30px;color:#9a9a9a;">40</span>
<span class="t" style="left:607.77px;top:540.97px;font-size:8.30px;color:#9a9a9a;">45</span>
<span class="t" style="left:653.00px;top:540.97px;font-size:8.30px;color:#9a9a9a;">50</span>
<span class="t" style="left:698.35px;top:540.97px;font-size:8.30px;color:#9a9a9a;">55</span>
<span class="t" style="left:743.62px;top:540.97px;font-size:8.30px;color:#9a9a9a;">60</span>
<span class="t" style="left:788.97px;top:540.97px;font-size:8.30px;color:#9a9a9a;">65</span>
<span class="t" style="left:834.32px;top:540.97px;font-size:8.30px;color:#9a9a9a;">70</span>
<span class="t" style="left:879.67px;top:540.97px;font-size:8.30px;color:#9a9a9a;">75</span>
<span class="t" style="left:471.96px;top:524.65px;font-size:7.50px;color:#9a9a9a;transform:scaleX(0.959);transform-origin:0 0;">1s</span>
<span class="t" style="left:743.63px;top:524.65px;font-size:7.50px;color:#9a9a9a;transform:scaleX(0.990);transform-origin:0 0;">2s</span>
<div class="a" style="left:209px;top:553px;width:8px;height:19px;background:#8db2dd;"></div>
<div class="a" style="left:209px;top:572px;width:8px;height:18px;background:#6a6a6a;"></div>
<svg style="left:210px;top:560px;" width="6" height="5" viewBox="0 0 6 5"><circle cx="3" cy="2.5" r="1.8" fill="#2d5a90"/></svg>
<div class="a" style="left:212.5px;top:540px;width:1.6px;height:68px;background:#3d85d8;"></div>
<svg style="left:209px;top:521px;" width="9" height="31" viewBox="0 0 9 31"><path d="M0 2 C0 0.8 0.8 0 2 0 H7 C8.2 0 9 0.8 9 2 V26 L4.5 30.5 L0 26 Z" fill="#3d85d8"/></svg>
<div class="a" style="left:210px;top:613px;width:93px;height:3px;background:#777;border-radius:1.5px;"></div>
<div class="a" style="left:209px;top:608px;width:704px;height:1px;background:#2a2a2a;"></div>
<div class="a" style="left:502px;top:493px;width:24px;height:23px;background:#464646;border-radius:2px;"></div>
<svg style="left:433px;top:499px;" width="10" height="10" viewBox="0 0 10 10"><rect x="0.3" y="0.3" width="9.4" height="9.4" fill="#c4c4c4"/><circle cx="5" cy="5.5" r="2" fill="#323232"/></svg>
<svg style="left:458px;top:499px;" width="10" height="10" viewBox="0 0 10 10"><rect x="0.3" y="0.3" width="9.4" height="9.4" fill="#c4c4c4"/><rect x="2.8" y="3" width="4.4" height="4.4" fill="none" stroke="#323232" stroke-width="1.1"/></svg>
<svg style="left:484px;top:499px;" width="10" height="10" viewBox="0 0 10 10"><rect x="0.3" y="0.3" width="9.4" height="9.4" fill="#c4c4c4"/><rect x="5.8" y="1.8" width="1.8" height="6.5" fill="#323232"/></svg>
<svg style="left:508px;top:496px;" width="15" height="15" viewBox="0 0 15 15"><rect x="1" y="3.5" width="9" height="9" fill="#c4c4c4"/><circle cx="5.5" cy="9" r="1.8" fill="#464646"/><path d="M9 5 L11 0.8 L13 5" stroke="#c4c4c4" stroke-width="1" fill="none"/><path d="M13 13 L14 13 L14 14" stroke="#c4c4c4" stroke-width="0.8" fill="none"/></svg>
<svg style="left:535px;top:497px;" width="13" height="13" viewBox="0 0 13 13"><rect x="0.5" y="0.5" width="9" height="9" fill="none" stroke="#c4c4c4" stroke-width="1"/><rect x="0.5" y="0.5" width="9" height="2" fill="#c4c4c4"/><circle cx="8.8" cy="8.8" r="3.6" fill="#c4c4c4"/><path d="M6.8 8.8 H10.8" stroke="#323232" stroke-width="1.2"/></svg>
<div class="a" style="left:554px;top:494px;width:1px;height:22px;background:#262626;"></div>
<svg style="left:561px;top:498px;" width="15" height="12" viewBox="0 0 15 12"><circle cx="5" cy="5.5" r="4.5" fill="#8a8a8a"/><circle cx="9" cy="5.5" r="4.5" fill="#c4c4c4"/><path d="M12.5 10.5 L14 10.5" stroke="#aaa" stroke-width="1"/></svg>
<svg style="left:588px;top:497px;" width="13" height="13" viewBox="0 0 13 13"><rect x="0.5" y="4.5" width="7" height="7.5" fill="#c4c4c4"/><rect x="4.5" y="0.5" width="8" height="7.5" fill="#c4c4c4" stroke="#323232" stroke-width="0.8"/><path d="M7.5 2.5 L10 4.3 L7.5 6" fill="#323232"/></svg>
<svg style="left:612px;top:498px;" width="15" height="11" viewBox="0 0 15 11"><path d="M4 1 L0.8 5.5 L4 10 M11 1 L14.2 5.5 L11 10" stroke="#c4c4c4" stroke-width="1.8" fill="none"/><path d="M7.5 2.5 L10.5 5.5 L7.5 8.5 L4.5 5.5 Z" fill="#c4c4c4"/></svg>
<svg style="left:640px;top:498px;" width="11" height="11" viewBox="0 0 11 11"><rect x="0.5" y="3.5" width="6" height="7" fill="#444"/><rect x="4" y="0.5" width="6.5" height="6.5" fill="#444"/></svg>
<div class="a" style="left:660px;top:494px;width:1px;height:22px;background:#262626;"></div>
<svg style="left:667px;top:497px;" width="14" height="13" viewBox="0 0 14 13"><path d="M1 5 V12 H13 V7" stroke="#c4c4c4" stroke-width="1.6" fill="none"/><path d="M4 9 C4 6 6 4.5 9 4.5 H11" stroke="#c4c4c4" stroke-width="1.6" fill="none"/><path d="M10 1.5 L13.5 4.5 L10 7.5 Z" fill="#c4c4c4"/></svg>
<svg style="left:695px;top:498px;" width="10" height="11" viewBox="0 0 10 11"><path d="M0.8 0.8 L9.5 5.5 L0.8 10.2 Z" fill="#c4c4c4"/></svg>
<svg style="left:800px;top:498px;" width="15" height="12" viewBox="0 0 15 12"><path d="M3.5 6 C4.5 3.5 6.5 2.5 8.5 2.5 C11 2.5 13 4.5 13 6.5" stroke="#c4c4c4" stroke-width="1.5" fill="none"/><path d="M1 3 L3.8 7.3 L6.8 4.2 Z" fill="#c4c4c4"/><path d="M1.5 10.2 H13.5" stroke="#c4c4c4" stroke-width="1.6"/></svg>
<div class="a" style="left:822px;top:503px;width:19px;height:1.6px;background:#bdbdbd;"></div>
<svg style="left:841px;top:499px;" width="10" height="10" viewBox="0 0 10 10"><circle cx="5" cy="5" r="4" fill="#323232" stroke="#cfcfcf" stroke-width="1.5"/></svg>
<div class="a" style="left:852px;top:503.3px;width:39px;height:1px;background:#444;"></div>
<svg style="left:898px;top:498px;" width="16" height="11" viewBox="0 0 16 11"><path d="M0.5 10 L5.5 2.5 L7.5 5.5 L10 0.8 L15.5 10 Z" fill="#c4c4c4"/><path d="M5.8 10 L7.8 5.5" stroke="#323232" stroke-width="0.8"/></svg>
<div class="a" style="left:36px;top:621px;width:821px;height:2px;background:#3a3a3a;"></div>
<div class="a" style="left:36px;top:621px;width:260px;height:2px;background:#e6e6e6;"></div>
<div class="a" style="left:557px;top:621px;width:37px;height:2px;background:#e08a2e;"></div>
<div class="a" style="left:820px;top:621px;width:36px;height:2px;background:#a0a0a0;"></div>
<svg style="left:915px;top:475px;" width="8" height="7" viewBox="0 0 8 7"><rect x="0" y="0" width="7.5" height="6" fill="#777"/><path d="M0.8 2H6.7M0.8 4H6.7" stroke="#555" stroke-width="0.6"/></svg>
<div class="a" style="left:926px;top:30px;width:2px;height:593px;background:#1e1e1e;"></div>
<div class="a" style="left:928px;top:30px;width:229px;height:593px;background:#323232;"></div>
<div class="a" style="left:928px;top:30px;width:229px;height:8px;background:#2d2d2d;"></div>
<div class="a" style="left:928px;top:38px;width:229px;height:1px;background:#232323;"></div>
<div class="a" style="left:928px;top:48px;width:229px;height:1px;background:#282828;"></div>
<svg style="left:1147px;top:32px;" width="7" height="5" viewBox="0 0 7 5"><path d="M0.8 0.5 L3 2.3 L0.8 4.1 M3.8 0.5 L6 2.3 L3.8 4.1" stroke="#c8c8c8" stroke-width="1" fill="none"/></svg>
<svg style="left:1147px;top:41.5px;" width="7" height="6" viewBox="0 0 7 6"><rect x="0" y="0" width="7" height="5.5" fill="#7a7a7a"/><path d="M0.8 1.9H6.2M0.8 3.6H6.2" stroke="#555" stroke-width="0.6"/></svg>
<span class="t" style="left:932.67px;top:40.87px;font-size:7.60px;color:#8a8a8a;transform:scaleX(1.039);transform-origin:0 0;">Properties</span>
<span class="t" style="left:981.33px;top:40.87px;font-size:7.60px;color:#f2f2f2;font-weight:bold;transform:scaleX(0.888);transform-origin:0 0;">Assets</span>
<span class="t" style="left:1014.42px;top:40.87px;font-size:7.60px;color:#8a8a8a;transform:scaleX(1.010);transform-origin:0 0;">Color</span>
<span class="t" style="left:1046.76px;top:40.87px;font-size:7.60px;color:#8a8a8a;transform:scaleX(1.020);transform-origin:0 0;">Align</span>
<span class="t" style="left:1077.18px;top:40.87px;font-size:7.60px;color:#8a8a8a;transform:scaleX(1.028);transform-origin:0 0;">Library</span>
<div class="a" style="left:979px;top:65px;width:60px;height:24px;background:#454545;border-radius:3px;"></div>
<span class="t" style="left:991.45px;top:72.50px;font-size:10.40px;color:#e4e4e4;transform:scaleX(1.021);transform-origin:0 0;">Default</span>
<span class="t" style="left:1056.76px;top:72.50px;font-size:10.40px;color:#e4e4e4;transform:scaleX(1.044);transform-origin:0 0;">Custom</span>
<div class="a" style="left:930.5px;top:54.3px;width:206.20000000000005px;height:47.400000000000006px;background:transparent;border:3px solid #dc7d12;"></div>
<div class="a" style="left:941px;top:103px;width:174px;height:20px;background:#262626;border-radius:2px;"></div>
<svg style="left:948px;top:107px;" width="14" height="14" viewBox="0 0 14 14"><circle cx="5.6" cy="5.6" r="4.2" stroke="#c8c8c8" stroke-width="1.4" fill="none"/><path d="M8.7 8.7 L12.5 12.5" stroke="#c8c8c8" stroke-width="1.5"/></svg>
<span class="t" style="left:977.56px;top:108.33px;font-size:10.00px;color:#555555;transform:scaleX(0.982);transform-origin:0 0;">Search</span>
<svg style="left:1126px;top:106px;" width="15" height="14" viewBox="0 0 15 14"><rect x="1" y="1" width="2.4" height="2.4" fill="#c8c8c8"/><rect x="1" y="5.8" width="2.4" height="2.4" fill="#c8c8c8"/><rect x="1" y="10.6" width="2.4" height="2.4" fill="#c8c8c8"/><path d="M5 2.2H14M5 7H14M5 11.8H14" stroke="#c8c8c8" stroke-width="1.4"/></svg>
<div class="a" style="left:928px;top:136px;width:229px;height:1px;background:#2a2a2a;"></div>
<div class="a" style="left:930px;top:138px;width:227px;height:30px;background:#2f2f2f;"></div>
<svg style="left:940px;top:150px;" width="8" height="6" viewBox="0 0 8 6"><path d="M0.8 0.8 L3.8 3.8 L6.8 0.8" stroke="#9a9a9a" stroke-width="1.2" fill="none"/></svg>
<span class="t" style="left:953.95px;top:148.97px;font-size:10.20px;color:#e0e0e0;transform:scaleX(1.010);transform-origin:0 0;-webkit-text-stroke:0.25px #e0e0e0;">Animated</span>
<div class="a" style="left:930.5px;top:138.2px;width:206.20000000000005px;height:29.100000000000023px;background:transparent;border:3px solid #dc7d12;"></div>
<div class="a" style="left:940.5px;top:174px;width:175px;height:24px;background:#2c2c2c;border:1px solid #3b3b3b;border-radius:3px;"></div>
<span class="t" style="left:949.03px;top:181.57px;font-size:10.20px;color:#d8d8d8;transform:scaleX(0.928);transform-origin:0 0;">Characters</span>
<svg style="left:1097px;top:184px;" width="10" height="6" viewBox="0 0 10 6"><path d="M1 0.8 L5 4.5 L9 0.8" stroke="#d0d0d0" stroke-width="1.5" fill="none"/></svg>
<div class="a" style="left:940.5px;top:204px;width:175px;height:24px;background:#2c2c2c;border:1px solid #3b3b3b;border-radius:3px;"></div>
<span class="t" style="left:949.06px;top:211.57px;font-size:10.20px;color:#d8d8d8;transform:scaleX(0.963);transform-origin:0 0;">Objects</span>
<svg style="left:1097px;top:214px;" width="10" height="6" viewBox="0 0 10 6"><path d="M1 0.8 L5 4.5 L9 0.8" stroke="#d0d0d0" stroke-width="1.5" fill="none"/></svg>
<svg style="left:1127px;top:179px;" width="12" height="15" viewBox="0 0 12 15"><path d="M0.5 0.8 H11.5 L7.3 6.5 V13.8 L4.7 11.5 V6.5 Z" fill="#c8c8c8"/></svg>
<div class="a" style="left:940px;top:240px;width:206px;height:230.5px;overflow:hidden;"><div class="a" style="left:5px;top:-36.0px;width:96px;height:53.5px;background:#d6d6d6;overflow:hidden;"><svg style="left:0;top:0;" width="96" height="53.5" viewBox="0 0 96 53.5"><path d="M9 40 L20 36 L27 42 L22 48 L14 46 Z" fill="#7a3a1a"/><circle cx="28" cy="44" r="4" fill="#fff" stroke="#222" stroke-width="0.8"/><circle cx="35" cy="47" r="3.5" fill="#f2c030"/><circle cx="41" cy="42" r="3.5" fill="#eee" stroke="#333" stroke-width="0.8"/><circle cx="49" cy="47" r="2.6" fill="#222"/><circle cx="44" cy="49" r="2.5" fill="#fff" stroke="#333" stroke-width="0.6"/><path d="M53 45 L62 37 M55 48 L65 44" stroke="#f0c040" stroke-width="2.2"/><path d="M30 49 L34 52" stroke="#f0c040" stroke-width="1.5"/></svg></div><div class="a" style="left:105px;top:-36.0px;width:96px;height:53.5px;background:#d6d6d6;overflow:hidden;"><svg style="left:0;top:0;" width="96" height="53.5" viewBox="0 0 96 53.5"><path d="M20 36 L32 35 L36 42 L28 47 Z" fill="#7a3a1a"/><circle cx="27" cy="42" r="3.5" fill="#fff" stroke="#222" stroke-width="0.8"/><circle cx="41" cy="43" r="3.5" fill="#eee" stroke="#333" stroke-width="0.8"/><circle cx="51" cy="40" r="3" fill="#222"/><path d="M38 46 V53 M42 46 V53" stroke="#e8d070" stroke-width="1.3"/><path d="M55 37 L62 38" stroke="#f0c040" stroke-width="1.5"/></svg></div><div class="a" style="left:5px;top:21.0px;width:96px;height:53.5px;background:#d6d6d6;overflow:hidden;"><svg style="left:0;top:0;" width="96" height="53.5" viewBox="0 0 96 53.5"><circle cx="30" cy="24" r="27" fill="#ee8c9a"/><circle cx="27" cy="28" r="19" fill="#f29aa6" /><circle cx="25" cy="31" r="12" fill="#ee8c9a"/><circle cx="23" cy="33" r="6" fill="#f29aa6"/>
<path d="M18 47 C24 42 30 39.5 36 38" stroke="#1a1a1a" stroke-width="1.6" fill="none"/>
<path d="M3 53.5 C8 47 18 42 32 40 C44 37 54 33 62 34 C70 35 73 40 74.5 53.5 Z" fill="#f8d898"/>
<path d="M4 53.5 C10 49 22 45 34 44 C50 42 64 44 74 53.5 Z" fill="#fae2b0"/>
<path d="M46 37 L52 40 M78 36 L72 39" stroke="#f0b040" stroke-width="2.5"/>
<circle cx="42" cy="32" r="7.8" fill="#f6f6f6" stroke="#ccc" stroke-width="0.6"/><path d="M39.2 29.2 L44.8 34.8 M44.8 29.2 L39.2 34.8" stroke="#111" stroke-width="2.3"/>
<circle cx="83.5" cy="37.5" r="7.5" fill="#f6f6f6" stroke="#ccc" stroke-width="0.6"/><path d="M80.8 34.8 L86.2 40.2 M86.2 34.8 L80.8 40.2" stroke="#111" stroke-width="2.3"/>
<circle cx="28" cy="48" r="1" fill="#f0b050"/><circle cx="52" cy="46" r="1" fill="#f0b050"/><circle cx="62" cy="50" r="1" fill="#f0b050"/><circle cx="40" cy="50" r="1" fill="#f0b050"/></svg></div><div class="a" style="left:105px;top:21.0px;width:96px;height:53.5px;background:#d6d6d6;overflow:hidden;"><svg style="left:0;top:0;" width="96" height="53.5" viewBox="0 0 96 53.5"><path d="M15 53.5 C18 40 30 33 45 31 C60 28 72 30 77 40 C79 46 79 50 78 53.5 Z" fill="#f8dca0"/>
<circle cx="32" cy="25" r="23" fill="#1890b8"/><circle cx="29" cy="29" r="16" fill="#1584ac"/><circle cx="28" cy="30.5" r="12" fill="#1890b8"/><circle cx="26" cy="32" r="7" fill="#1380a8"/>
<path d="M17 53.5 C22 44 34 36 52 32 C64 30 74 33 77 40 L78 53.5 Z" fill="#fae0a8"/>
<path d="M58 25 L60 31 M74 26 L72 31" stroke="#f0b040" stroke-width="2.5"/>
<circle cx="55" cy="17" r="8.3" fill="#fafafa" stroke="#ddd" stroke-width="0.6"/><circle cx="56" cy="17.5" r="4.5" fill="#1ea8e8"/><circle cx="55" cy="16" r="1.6" fill="#fff"/>
<circle cx="79" cy="20" r="7" fill="#fafafa" stroke="#ddd" stroke-width="0.6"/><circle cx="80" cy="20.5" r="3.8" fill="#1ea8e8"/><circle cx="79" cy="19" r="1.3" fill="#fff"/></svg></div><div class="a" style="left:5px;top:78.0px;width:96px;height:53.5px;background:#d6d6d6;overflow:hidden;"><svg style="left:0;top:0;" width="96" height="53.5" viewBox="0 0 96 53.5"></svg></div><div class="a" style="left:105px;top:78.0px;width:96px;height:53.5px;background:#d6d6d6;overflow:hidden;"><svg style="left:0;top:0;" width="96" height="53.5" viewBox="0 0 96 53.5"><path d="M31 4 C33 1 38 0 44 0 L54 0 C57 2 58 6 58 10 L58 21 C54 23 44 24 36 22 L31 18 Z" fill="#a3182a"/>
<path d="M46 0.5 L51 8 M50 0.5 L55 8 M31 2 L36 9" stroke="#f2dede" stroke-width="1.3"/>
<rect x="23" y="9" width="15" height="13" rx="1.5" fill="#951526"/><ellipse cx="35" cy="16" rx="3.2" ry="3.8" fill="#140508"/><path d="M25 12 V19" stroke="#e8c8c8" stroke-width="0.8"/>
<rect x="57" y="10.5" width="15" height="8.5" fill="#a3182a"/><rect x="59" y="13" width="10" height="2.5" fill="#3a0a10"/><path d="M58 17.5 H71" stroke="#f0d0d0" stroke-width="0.6"/>
<circle cx="52" cy="16" r="3.6" fill="#2ab6e6" stroke="#fff" stroke-width="0.8"/>
<path d="M27 24 L56 23 L58 40 L52 46 L32 46 L24 40 Z" fill="#a3182a"/>
<circle cx="31" cy="31" r="3.5" fill="#d8c8c8"/><circle cx="42" cy="28" r="3" fill="#c02a3a"/><path d="M40 34 V40 M44 32 L48 38" stroke="#f0d8d8" stroke-width="0.9"/>
<path d="M24 28 C22 32 22 38 25 42 L33 40 L33 28 Z" fill="#8c1424"/>
<path d="M54 33 C57 33 60 37 59 41 C58 43 55 43 53 41 Z" fill="#2a0c12"/><path d="M60 40 L68 49" stroke="#f4f4f4" stroke-width="0.8"/>
<path d="M30 46 L40 46 L41 53.5 L28 53.5 Z M45 46 L55 46 L57 53.5 L44 53.5 Z" fill="#8c1424"/>
<path d="M29 49.5 H40 M44.5 49.5 H56" stroke="#fff" stroke-width="1"/></svg></div><div class="a" style="left:5px;top:135.5px;width:96px;height:53.5px;background:#d6d6d6;overflow:hidden;"><svg style="left:0;top:0;" width="96" height="53.5" viewBox="0 0 96 53.5"><path d="M52 0.5 L58 2 L55 13 L49 11 Z" fill="#8c1424"/><path d="M53 2.5 L56 3.5" stroke="#f0d0d0" stroke-width="0.8"/>
<path d="M48 12 C52 10 60 12 64 16 C66 20 66 28 64 33 C60 36 54 36 50 33 L46 20 Z" fill="#a3182a"/>
<path d="M59 15.5 L60 21.5 M61.5 16.5 L62.5 22 M64 17.5 L64.5 22" stroke="#f4e8e8" stroke-width="1.2"/>
<circle cx="58.7" cy="28.2" r="3" fill="#2ab6e6" stroke="#3a0a10" stroke-width="0.8"/>
<circle cx="45" cy="21.5" r="4.6" fill="#2a0c12"/><circle cx="45" cy="21.5" r="2.3" fill="#a3182a"/>
<path d="M37 27 C42 24 52 24 57 30 L56 41 C52 45 42 46 36 42 C34 37 34 31 37 27 Z" fill="#a3182a"/>
<path d="M38 33 C42 31 48 31 51 34 M44 36 L46 41" stroke="#f0d0d0" stroke-width="0.9" fill="none"/>
<path d="M51 40 C54 40 56 42 55 45 L51 46 Z" fill="#2a0c12"/>
<path d="M31 47 L38 43 L44 48 L40 53 L33 52 Z M43 45 L50 44 L53 50 L47 53 Z" fill="#8c1424"/>
<path d="M33 49 L40 47 M46 48 L51 47" stroke="#fff" stroke-width="0.9"/></svg></div><div class="a" style="left:105px;top:135.5px;width:96px;height:53.5px;background:#d6d6d6;overflow:hidden;"><svg style="left:0;top:0;" width="96" height="53.5" viewBox="0 0 96 53.5"><path d="M75 16 C82 11 88 8.5 95.5 8.2" stroke="#111" stroke-width="2" fill="none"/>
<path d="M75 30 L83 28.3 L89.2 33.6 L86.6 37.1 L76.9 38 Z" fill="#f5be5a" stroke="#111" stroke-width="1.8" stroke-linejoin="round"/>
<path d="M42 24 L49.5 20.3 C55 18 62 17.7 75 17.7 C79 19 78 28 76.9 33.6 C74 37 70 38 68 38 L57.4 35.3 L46 40 Z" fill="#f5be5a" stroke="#111" stroke-width="1.8" stroke-linejoin="round"/>
<path d="M54.8 35.3 L67.1 31.8 L68.9 42.4 L67.1 52.1 L61.8 51.2 L55.7 46 Z" fill="#f5be5a" stroke="#111" stroke-width="1.8" stroke-linejoin="round"/>
<path d="M62 40 L68 38" stroke="#111" stroke-width="1.2"/>
<path d="M20.3 17.7 C24 14.5 27 14 30 14.1 C34 14.1 37 15.5 39.8 17.7 C44 21 47.5 25 49.5 28.3 C52 32 54 36 53.9 38.9 C53.5 43 52 46.5 49.5 47.7 C45 49.5 41 49.8 37.1 49.5 C33 49 30 48 27.4 46 C24.5 43 23 40 22 37 C20.5 33 19.5 30 19.4 26.5 Z" fill="#f5be5a" stroke="#111" stroke-width="2" stroke-linejoin="round"/>
<path d="M2.6 37 C2.5 30 3.5 24 5.3 20.3 C7 17.5 8.5 15.8 10.6 15.5 L17.7 15 C19.5 15.5 21 17.5 21.2 19.4 C21 23 20.5 26 19.4 29 C18 33 16 36 14.1 38 C12 39.5 10 40.2 8 40 C5 39.8 3 39 2.6 37 Z" fill="#f5be5a" stroke="#111" stroke-width="2" stroke-linejoin="round"/>
<path d="M33.6 11.5 C36 9 38.5 7.2 41.5 7 C45 6.8 48 8 50.4 9.7 C52.5 11.5 53.8 13.5 53.9 15.9 C54 18.5 53 20.5 51.2 21.2 C48.5 21.5 46.5 20.5 44.2 19.4 C41 17.8 38.5 16.8 37.1 15.9 Z" fill="#f5be5a" stroke="#111" stroke-width="1.8" stroke-linejoin="round"/>
<ellipse cx="39.8" cy="30.5" rx="6.8" ry="8" fill="#111"/><circle cx="28.3" cy="22.5" r="1.8" fill="#111"/><circle cx="33.1" cy="19.4" r="1.8" fill="#111"/></svg></div><div class="a" style="left:5px;top:193.0px;width:96px;height:53.5px;background:#d6d6d6;overflow:hidden;"><svg style="left:0;top:0;" width="96" height="53.5" viewBox="0 0 96 53.5"><path d="M36.4 37.5 L35.5 30 L37 28 L35.6 22 L37.5 19.5 L38 15 L40.5 13 L41 9.5 L44 7.5 L45.5 4.5 L49 3.5 L52.5 0.5 L56 0.5 L58 14 L59.3 37.5 Z" fill="#cfcae8"/>
<path d="M59.3 37.5 L60.2 17.8 L62.5 15 L63 11 L66 7.7 L69 6.5 L72.9 3.4 L75.4 7.7 L76.3 21.2 L74 30 L71.2 37.5 Z" fill="#6a7090"/>
<path d="M13.5 37.5 C16 33 19 30.5 24 30 L33.9 30.5 C36 32 38 34.5 39 37.5 Z" fill="#5a6480"/>
<path d="M70 37.5 C71 34.5 74 33 77 33.5 C79 34.5 80 36 80 37.5 Z" fill="#5a6480"/><circle cx="67" cy="37" r="1.2" fill="#b040b0"/><circle cx="70" cy="37" r="1" fill="#20a080"/></svg></div><div class="a" style="left:105px;top:193.0px;width:96px;height:53.5px;background:#d6d6d6;overflow:hidden;"><svg style="left:0;top:0;" width="96" height="53.5" viewBox="0 0 96 53.5"><path d="M37.3 8.5 C37 3.5 41 0.8 45 0.8 C49 0.8 52.8 3.5 52.5 8.5 Z" fill="#c2d040"/>
<path d="M38 8.5 L45.5 23 M41.5 8.5 L45.5 23 M45 8.5 L45.8 23 M48.5 8.5 L46 23 M52 8.5 L46.2 23" stroke="#f8f8f8" stroke-width="1"/>
<path d="M32.2 37.5 L33 30 C34 26 38 23.5 44 23 C50 22.5 54 23.5 56 24.6 C59 27 61 32 61.9 37.5 Z" fill="#f08484"/>
<path d="M38 31 L40 29 L42 32 M39 34 L41 33" stroke="#ffffff" stroke-width="1" fill="none"/></svg></div></div>
<div class="a" style="left:945px;top:318px;width:96px;height:53.5px;background:#d6d6d6;overflow:hidden;"><svg style="left:30.6px;top:-0.9px;" width="37.27" height="56.54" viewBox="0 0 821 1245.6"><path d="M 250 933 C 300 915 360 915 392 928 L 398 1030 C 350 1045 300 1045 268 1040 Z" fill="#d0301f" stroke="#1a1a1a" stroke-width="8" stroke-linejoin="round"/><path d="M 470 913 C 520 905 600 910 632 920 L 626 1045 C 580 1050 520 1048 480 1040 Z" fill="#d0301f" stroke="#1a1a1a" stroke-width="8" stroke-linejoin="round"/><path d="M 122 1030 C 150 1000 180 980 210 972 L 322 1080 C 345 1110 345 1150 330 1170 L 292 1210 C 240 1150 170 1090 122 1030 Z" fill="#7d3838" stroke="#1a1a1a" stroke-width="8" stroke-linejoin="round"/><path d="M 150 1058 L 300 1185" stroke="#5a2222" stroke-width="9"/><path d="M 205 968 C 220 955 240 950 252 952 L 366 1040 C 355 1065 335 1085 318 1092 Z" fill="#f1f3f5" stroke="#1a1a1a" stroke-width="8" stroke-linejoin="round"/><path d="M 440 1080 L 598 1108 C 630 1115 655 1130 660 1160 L 662 1208 L 418 1188 C 420 1140 428 1100 440 1080 Z" fill="#7d3838" stroke="#1a1a1a" stroke-width="8" stroke-linejoin="round"/><path d="M 425 1168 L 657 1188" stroke="#5a2222" stroke-width="9"/><path d="M 458 992 C 510 1000 570 1020 616 1040 L 606 1115 C 550 1100 490 1090 444 1082 Z" fill="#f1f3f5" stroke="#1a1a1a" stroke-width="8" stroke-linejoin="round"/><path d="M 115 610 C 150 560 220 540 270 560 L 700 740 L 700 930 L 270 925 L 95 800 C 62 740 72 660 115 610 Z" fill="#d0301f" stroke="#1a1a1a" stroke-width="8" stroke-linejoin="round"/><path d="M 125 630 C 110 680 105 730 100 770 L 190 730 C 170 700 160 660 125 630 Z" fill="#e8493a"/><path d="M 680 770 C 700 745 715 730 732 722 C 752 750 768 790 776 820 L 705 856 Z" fill="#f1f3f5" stroke="#1a1a1a" stroke-width="8" stroke-linejoin="round"/><path d="M 612 880 C 640 860 670 845 700 840 L 770 838 C 790 845 800 862 796 880 C 800 905 795 930 782 945 C 750 958 720 962 700 958 C 675 950 655 940 642 918 Z" fill="#f1f3f5" stroke="#1a1a1a" stroke-width="8" stroke-linejoin="round"/><path d="M 600 888 L 690 868 L 702 915 L 616 928 Z" fill="#f1f3f5" stroke="#1a1a1a" stroke-width="8" stroke-linejoin="round"/><path d="M 268 752 C 400 760 560 760 692 745 L 692 873 C 560 882 420 882 300 880 Z" fill="#7d3838" stroke="#1a1a1a" stroke-width="8" stroke-linejoin="round"/><path d="M 290 852 C 420 858 560 856 686 846" stroke="#5c2727" stroke-width="8" fill="none"/><path d="M 300 888 L 512 878 L 548 925 L 312 945 Z" fill="#f1f3f5" stroke="#1a1a1a" stroke-width="8" stroke-linejoin="round"/><ellipse cx="568" cy="832" rx="50" ry="46" fill="#7b3838" stroke="#e9b631" stroke-width="22"/><ellipse cx="568" cy="832" rx="63" ry="59" fill="none" stroke="#1a1a1a" stroke-width="5"/><path d="M 72 770 C 120 750 180 728 236 718 C 256 745 270 785 274 815 C 220 835 160 855 102 878 C 85 845 75 805 72 770 Z" fill="#f1f3f5" stroke="#1a1a1a" stroke-width="8" stroke-linejoin="round"/><path d="M 165 858 C 185 835 220 820 262 818 C 292 822 310 845 308 872 C 312 905 305 935 290 948 C 265 958 230 955 200 945 C 178 930 165 895 165 858 Z" fill="#d0301f" stroke="#1a1a1a" stroke-width="8" stroke-linejoin="round"/><path d="M 262 380 C 228 470 228 600 285 700 C 340 765 480 770 600 790 C 690 760 765 690 765 615 C 765 555 725 495 690 455 L 330 430 Z" fill="#eef1f4" stroke="#1a1a1a" stroke-width="8" stroke-linejoin="round"/><path d="M 300 640 C 350 720 460 745 600 770 C 660 745 720 700 740 640 C 680 700 620 720 560 700 C 480 700 380 690 300 640 Z" fill="#d5dbe2"/><path d="M 232 378 C 175 380 168 470 212 492 C 242 505 268 470 272 440 Z" fill="#f3dc9c" stroke="#1a1a1a" stroke-width="8" stroke-linejoin="round"/><path d="M 325 345 L 690 335 L 695 470 L 330 480 Z" fill="#f6e4b4" stroke="#1a1a1a" stroke-width="8" stroke-linejoin="round"/><ellipse cx="405" cy="452" rx="38" ry="22" fill="#f2a6a6"/><ellipse cx="645" cy="446" rx="28" ry="21" fill="#f2a6a6"/><circle cx="560" cy="438" r="38" fill="#f5c6b8" stroke="#1a1a1a" stroke-width="6"/><circle cx="570" cy="420" r="10" fill="#fff"/><path d="M 415 432 C 425 407 465 407 475 432 M 585 432 C 595 412 625 412 635 432" stroke="#1a1a1a" stroke-width="7" fill="none"/><path d="M 330 470 C 335 520 380 548 450 548 C 490 548 510 532 530 530 C 550 552 600 562 650 542 C 692 522 702 480 686 452 C 650 468 610 468 580 460 C 540 468 500 468 470 458 C 420 468 380 474 330 470 Z" fill="#f2f4f6" stroke="#1a1a1a" stroke-width="8" stroke-linejoin="round"/><path d="M 360 522 C 400 542 460 542 500 527 M 560 542 C 600 552 650 537 670 512" stroke="#c9d0d8" stroke-width="8" fill="none"/><path d="M 112 305 C 150 165 285 35 440 26 C 578 20 652 130 666 245 L 190 300 Z" fill="#d0301f" stroke="#1a1a1a" stroke-width="8" stroke-linejoin="round"/><path d="M 150 270 C 190 170 290 80 380 55 C 320 115 300 165 325 200 C 375 190 420 182 455 212 C 380 240 255 272 185 292 Z" fill="#a51f17"/><path d="M 430 38 C 525 33 605 90 645 185 C 600 130 520 72 430 38 Z" fill="#e65a48"/><path d="M 180 292 L 680 232 C 696 262 696 318 686 342 L 195 376 C 180 350 176 315 180 292 Z" fill="#f1f3f5" stroke="#1a1a1a" stroke-width="8" stroke-linejoin="round"/><path d="M 200 362 L 682 330" stroke="#cbd1d7" stroke-width="10"/><path d="M 362 366 C 362 354 372 352 385 352 L 490 352 C 500 352 502 360 500 372 L 498 398 L 370 398 C 362 398 362 390 362 382 Z" fill="#e6ebf0" stroke="#1a1a1a" stroke-width="8" stroke-linejoin="round"/><path d="M 565 362 C 565 354 575 352 585 352 L 660 350 C 668 350 670 358 668 370 L 666 397 L 570 397 C 565 397 565 390 565 382 Z" fill="#e6ebf0" stroke="#1a1a1a" stroke-width="8" stroke-linejoin="round"/><path d="M 147 338 C 147 372 119 400 85 400 C 51 400 23 372 23 338 C 23 304 51 276 85 276 C 119 276 147 304 147 338 Z" fill="#f1f3f5" stroke="#1a1a1a" stroke-width="8" stroke-linejoin="round"/><path d="M 40 360 C 60 395 110 400 135 370 C 110 385 70 385 40 360 Z" fill="#c5ccd2"/><ellipse cx="420" cy="602" rx="20" ry="15" fill="#fff" stroke="#1a1a1a" stroke-width="6"/></svg><div class="a" style="left:0;top:38.5px;width:96px;height:15px;background:rgba(244,244,244,0.88);"></div></div>
<span class="t" style="left:951.18px;top:361.10px;font-size:9.80px;color:#3a3a3a;transform:scaleX(0.957);transform-origin:0 0;">Santa Run</span>
<div class="a" style="left:944px;top:317px;width:98px;height:55.5px;background:transparent;border:2px solid #2f7fe0;"></div>
<div class="a" style="left:1148px;top:267px;width:3.5px;height:28px;background:#5a5a5a;border-radius:2px;"></div>
<span class="t" style="left:1081.55px;top:484.07px;font-size:10.20px;color:#d8d8d8;transform:scaleX(0.977);transform-origin:0 0;">Show next</span>
<svg style="left:1132px;top:483px;" width="9" height="11" viewBox="0 0 9 11"><path d="M4.5 0.5 V9.5 M1 6 L4.5 9.5 L8 6" stroke="#d8d8d8" stroke-width="1.2" fill="none"/></svg>
<div class="a" style="left:928px;top:511px;width:229px;height:1px;background:#2a2a2a;"></div>
<div class="a" style="left:928px;top:543px;width:229px;height:1px;background:#262626;"></div>
<div class="a" style="left:928px;top:575px;width:229px;height:1px;background:#2a2a2a;"></div>
<svg style="left:939px;top:524px;" width="6" height="9" viewBox="0 0 6 9"><path d="M1 0.8 L4.5 4.5 L1 8.2" stroke="#999" stroke-width="1.1" fill="none"/></svg>
<svg style="left:939px;top:555px;" width="6" height="9" viewBox="0 0 6 9"><path d="M1 0.8 L4.5 4.5 L1 8.2" stroke="#999" stroke-width="1.1" fill="none"/></svg>
<span class="t" style="left:952.94px;top:524.93px;font-size:10.00px;color:#dedede;transform:scaleX(1.012);transform-origin:0 0;-webkit-text-stroke:0.25px #dedede;">Static</span>
<span class="t" style="left:952.95px;top:555.43px;font-size:10.00px;color:#dedede;transform:scaleX(1.008);transform-origin:0 0;-webkit-text-stroke:0.25px #dedede;">Sound clips</span>
<div class="a" style="left:930.5px;top:507px;width:206.20000000000005px;height:72.29999999999995px;background:transparent;border:3px solid #dc7d12;"></div>
<div class="a" style="left:940px;top:590px;width:206px;height:10px;background:transparent;border:1px solid #4a4a4a;border-radius:3px;"></div>
<div class="a" style="left:928px;top:596px;width:229px;height:27px;background:#323232;"></div>
<div class="a" style="left:928px;top:595.5px;width:229px;height:1px;background:#262626;"></div>
<svg style="left:944px;top:601px;" width="17" height="15" viewBox="0 0 17 15"><path d="M4 10 C1.5 10 0.8 8.5 0.8 7.2 C0.8 5.5 2.2 4.5 3.8 4.6 C4.2 2.2 6 0.8 8.5 0.8 C11 0.8 12.5 2.5 12.8 4.5 C14.8 4.5 16.2 5.8 16.2 7.5 C16.2 9 15 10 13 10 Z" fill="#c8c8c8"/><path d="M8.5 6 V14 M6 8.5 L8.5 6 L11 8.5" stroke="#323232" stroke-width="1.2" fill="none"/><path d="M8.5 10 V14.5" stroke="#c8c8c8" stroke-width="1.3"/></svg>
<svg style="left:975.5px;top:605px;" width="6" height="6" viewBox="0 0 6 6"><circle cx="3" cy="3" r="2.4" fill="#f08a1c"/></svg>
<span class="t" style="left:987.94px;top:604.43px;font-size:10.00px;color:#d0d0d0;transform:scaleX(0.949);transform-origin:0 0;">New assets available</span>
<svg style="left:1127px;top:600px;" width="13" height="16" viewBox="0 0 13 16"><path d="M0.8 3 H12.2 M4.5 3 V1 H8.5 V3" stroke="#c8c8c8" stroke-width="1.2" fill="none"/><path d="M1.8 4 L2.8 15 H10.2 L11.2 4 Z" fill="#c8c8c8"/><path d="M4.8 5.5 V13.5 M6.5 5.5 V13.5 M8.2 5.5 V13.5" stroke="#323232" stroke-width="0.8"/></svg>
</body></html>
